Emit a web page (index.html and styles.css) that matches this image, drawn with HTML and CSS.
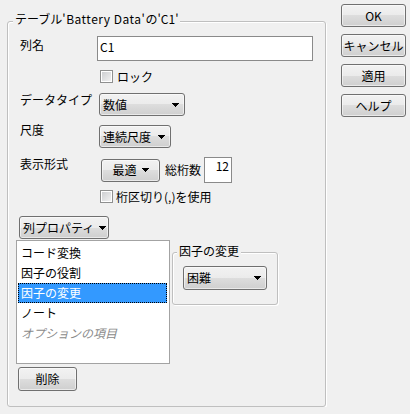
FILE: index.html
```html
<!DOCTYPE html>
<html lang="ja">
<head>
<meta charset="utf-8">
<link rel="stylesheet" href="styles.css">
</head>
<body>
<div class="dialog">
  <div class="group main">
    <div class="legend">テーブル<span class="latin">'Battery Data'</span>の'C1'</div>
    <div class="row r-name">
      <span class="label">列名</span>
      <div class="textbox name">C1</div>
    </div>
    <div class="row check-row r-lock">
      <span class="check"></span><span>ロック</span>
    </div>
    <div class="row r-type">
      <span class="label">データタイプ</span>
      <div class="combo w-type"><span>数値</span><svg class="arrow" width="7" height="4" viewBox="0 0 7 4" shape-rendering="crispEdges"><path d="M0 0h7v1H0zM1 1h5v1H1zM2 2h3v1H2zM3 3h1v1H3z"/></svg></div>
    </div>
    <div class="row r-scale">
      <span class="label">尺度</span>
      <div class="combo w-scale"><span>連続尺度</span><svg class="arrow" width="7" height="4" viewBox="0 0 7 4" shape-rendering="crispEdges"><path d="M0 0h7v1H0zM1 1h5v1H1zM2 2h3v1H2zM3 3h1v1H3z"/></svg></div>
    </div>
    <div class="row r-format">
      <span class="label">表示形式</span>
      <div class="ctrls">
        <div class="combo w-best"><span>最適</span><svg class="arrow" width="7" height="4" viewBox="0 0 7 4" shape-rendering="crispEdges"><path d="M0 0h7v1H0zM1 1h5v1H1zM2 2h3v1H2zM3 3h1v1H3z"/></svg></div>
        <span class="digits-label">総桁数</span>
        <div class="textbox digits">12</div>
      </div>
    </div>
    <div class="row check-row r-sep">
      <span class="check"></span><span>桁区切り(,)を使用</span>
    </div>
    <div class="row r-props">
      <div class="combo w-props"><span>列プロパティ</span><svg class="arrow" width="7" height="4" viewBox="0 0 7 4" shape-rendering="crispEdges"><path d="M0 0h7v1H0zM1 1h5v1H1zM2 2h3v1H2zM3 3h1v1H3z"/></svg></div>
    </div>
    <div class="row r-list">
      <ul class="listbox">
        <li>コード変換</li>
        <li>因子の役割</li>
        <li class="selected">因子の変更</li>
        <li>ノート</li>
        <li class="optional">オプションの項目</li>
      </ul>
      <div class="group sub">
        <div class="legend sub-legend">因子の変更</div>
        <div class="combo w-diff"><span>困難</span><svg class="arrow" width="7" height="4" viewBox="0 0 7 4" shape-rendering="crispEdges"><path d="M0 0h7v1H0zM1 1h5v1H1zM2 2h3v1H2zM3 3h1v1H3z"/></svg></div>
      </div>
    </div>
    <div class="row r-delete">
      <div class="button delete">削除</div>
    </div>
  </div>
  <div class="buttons">
    <div class="button side">OK</div>
    <div class="button side">キャンセル</div>
    <div class="button side">適用</div>
    <div class="button side">ヘルプ</div>
  </div>
</div>
</body>
</html>
```
FILE: styles.css
```css
html, body {
  margin: 0;
  background: #f0f0f0;
}
body {
  font-family: "Noto Sans CJK JP", "Noto Sans", sans-serif;
  font-size: 12px;
  line-height: 16px;
  color: #000;
}
.dialog {
  display: flex;
  align-items: flex-start;
  padding: 4px 0 0 7px;
}
.group {
  position: relative;
  box-sizing: border-box;
  border: 1px solid #bfbfbf;
  border-radius: 3px;
  box-shadow: inset 1px 1px 0 #fff, 1px 1px 0 #fff;
}
.main {
  margin-top: 17px;
  width: 319px;
  height: 386px;
  padding: 14px 0 0 8px;
}
.legend {
  position: absolute;
  top: -11px;
  left: 5px;
  padding: 0 2px;
  background: #f0f0f0;
  line-height: 16px;
  white-space: nowrap;
}
.latin { letter-spacing: 0.5px; }
.row {
  display: flex;
  align-items: flex-start;
}
.label {
  width: 77px;
  margin-left: 4px;
  line-height: 16px;
  white-space: nowrap;
}
.textbox {
  box-sizing: border-box;
  background: #fff;
  border: 1px solid #8a8a8a;
}
.name {
  width: 216px;
  height: 25px;
  padding: 2px 2px;
}
.r-name .label { margin-top: 1px; }

.check-row {
  align-items: center;
  margin-left: 84px;
  height: 13px;
  gap: 4px;
}
.check {
  box-sizing: border-box;
  width: 13px;
  height: 13px;
  border: 1px solid #8e8f8f;
  box-shadow: inset 0 0 0 1px #fff;
  background: linear-gradient(135deg, #c9cbce, #f5f5f5);
}
.r-lock { margin-top: 9px; }
.r-sep { margin-top: 7px; gap: 3px; }

.combo, .button {
  box-sizing: border-box;
  height: 23px;
  border: 1px solid #707070;
  border-radius: 3px;
  background: linear-gradient(#f2f2f2 0%, #ebebeb 50%, #dddddd 50%, #cfcfcf 100%);
  box-shadow: inset 0 0 0 1px rgba(255,255,255,0.55);
}
.combo {
  display: flex;
  align-items: center;
  justify-content: space-between;
  padding: 0 5px 0 3px;
  white-space: nowrap;
}
.arrow { display: block; flex: none; }

.r-type { margin-top: 10px; }
.r-type .label { margin-top: -1px; }
.w-type { width: 86px; margin-left: 2px; }

.r-scale { margin-top: 9px; }
.r-scale .label { margin-top: -3px; }
.w-scale { width: 72px; margin-left: 2px; }

.r-format { margin-top: 9px; }
.r-format .label { margin-top: -1px; }
.ctrls {
  display: flex;
  align-items: center;
  height: 26px;
}
.w-best {
  width: 59px;
  margin-left: 4px;
  justify-content: center;
  gap: 5px;
  padding: 0;
}
.digits-label { margin-left: 5px; }
.digits {
  width: 28px;
  height: 26px;
  margin-left: 3px;
  padding: 0 2px 0 0;
  text-align: right;
}

.r-props { margin-top: 13px; }
.w-props { width: 90px; margin-left: 3px; padding-right: 2px; }

.r-list { margin-top: 1px; }
.listbox {
  box-sizing: border-box;
  width: 154px;
  height: 124px;
  margin: 0;
  padding: 2px 2px 0 1px;
  list-style: none;
  background: #fff;
  border: 1px solid #a3a3a3;
}
.listbox li {
  height: 20px;
  line-height: 20px;
  padding-left: 3px;
  white-space: nowrap;
}
.listbox .selected {
  background: #3399ff;
  color: #fff;
  outline: 1px dotted #000;
  outline-offset: -1px;
}
.listbox .optional {
  color: #8a8a8a;
  font-style: italic;
}
.sub {
  margin-top: 12px;
  margin-left: 2px;
  width: 106px;
  height: 53px;
  padding: 13px 0 0 10px;
}
.sub-legend {
  top: -10px;
  left: 4px;
}
.w-diff { width: 84px; height: 24px; }

.r-delete { margin-top: 3px; }
.button {
  display: flex;
  align-items: center;
  justify-content: center;
  white-space: nowrap;
}
.delete { width: 59px; height: 24px; margin-left: 2px; }

.buttons {
  display: flex;
  flex-direction: column;
  gap: 7px;
  margin-left: 15px;
}
.side { width: 65px; height: 23px; }
```
